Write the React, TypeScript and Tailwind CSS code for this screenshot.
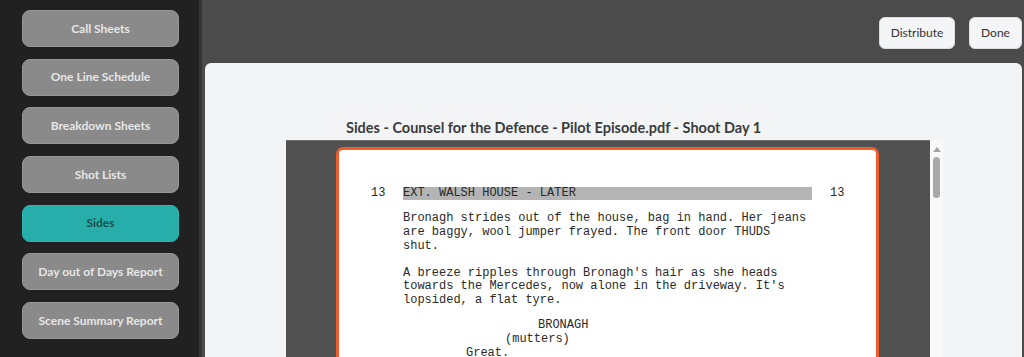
import React from "react";

const navItems = [
  "Call Sheets",
  "One Line Schedule",
  "Breakdown Sheets",
  "Shot Lists",
  "Sides",
  "Day out of Days Report",
  "Scene Summary Report",
];

export default function App() {
  return (
    <div className="flex w-[1024px] h-[357px] overflow-hidden font-['Lato',sans-serif]">
      <aside className="w-[202px] shrink-0 bg-[#212121] border-r-[3px] border-[#353535] pl-[22px] pt-[10px] flex flex-col gap-[11.7px]">
        {navItems.map((item) => {
          const active = item === "Sides";
          return (
            <div
              key={item}
              className={
                active
                  ? "w-[157px] h-[37px] shrink-0 rounded-[8px] bg-[#28aeaa] border border-[#2fb6b2] flex items-center justify-center text-[12px] font-bold text-[#1d4e4c]"
                  : "w-[157px] h-[37px] shrink-0 rounded-[8px] bg-[#8a8a8a] border border-[#979797] flex items-center justify-center text-[12px] font-bold text-[#e6e6e6]"
              }
            >
              {item}
            </div>
          );
        })}
      </aside>
      <main className="flex-1 bg-[#4b4b4b] flex flex-col min-w-0">
        <div className="h-[63px] shrink-0 flex justify-end items-start pt-[17px] pr-[2px] gap-[14px]">
          <button className="h-[32px] w-[76px] rounded-[6px] bg-[#f4f5f6] border border-[#dcdcdc] text-[12px] text-[#333] font-['Lato',sans-serif]">
            Distribute
          </button>
          <button className="h-[32px] w-[53px] rounded-[6px] bg-[#f4f5f6] border border-[#dcdcdc] text-[12px] text-[#333] font-['Lato',sans-serif]">
            Done
          </button>
        </div>
        <div className="flex-1 ml-[3px] mr-[2px] rounded-t-[6px] bg-[#f3f4f5] flex flex-col overflow-hidden">
          <div className="pl-[141px] pt-[55px] h-[77px] shrink-0 text-[14.5px] leading-[20px] font-bold text-[#3b3b3b] whitespace-nowrap">
            Sides - Counsel for the Defence - Pilot Episode.pdf - Shoot Day 1
          </div>
          <div className="ml-[81px] flex flex-1">
            <div className="w-[644px] bg-[#515151] border-t border-[#6b6b6b] px-[50px] pt-[6px]">
              <div className="w-[543px] h-[300px] bg-white border-[3px] border-b-0 border-[#ef5d2d] rounded-t-[7px] pt-[36.5px] pl-[32px] font-['Liberation_Mono',monospace] text-[12px] leading-[13.8px] text-[#2a2a2a] whitespace-pre">
                <div className="flex">
                  <span className="w-[32px]">13</span>
                  <span className="w-[409px] bg-[#b4b4b4]">EXT. WALSH HOUSE - LATER</span>
                  <span className="ml-[18px]">13</span>
                </div>
                <div className="pl-[32px]">
                  <div className="mt-[12px]">
                    <div>Bronagh strides out of the house, bag in hand. Her jeans</div>
                    <div>are baggy, wool jumper frayed. The front door THUDS</div>
                    <div>shut.</div>
                  </div>
                  <div className="mt-[13px]">
                    <div>A breeze ripples through Bronagh's hair as she heads</div>
                    <div>towards the Mercedes, now alone in the driveway. It's</div>
                    <div>lopsided, a flat tyre.</div>
                  </div>
                  <div className="mt-[11px]">
                    <div className="pl-[135px]">BRONAGH</div>
                    <div className="pl-[102px]">(mutters)</div>
                    <div className="pl-[63px]">Great.</div>
                  </div>
                </div>
              </div>
            </div>
            <div className="w-[13px] bg-[#f9f9f9] flex flex-col items-center pt-[7px]">
              <svg width="8" height="5" viewBox="0 0 8 5">
                <path d="M0 5 L4 0 L8 5 Z" fill="#a3a3a3" />
              </svg>
              <div className="mt-[5px] w-[7px] h-[41px] rounded-full bg-[#a8a8a8]" />
            </div>
          </div>
        </div>
      </main>
    </div>
  );
}
